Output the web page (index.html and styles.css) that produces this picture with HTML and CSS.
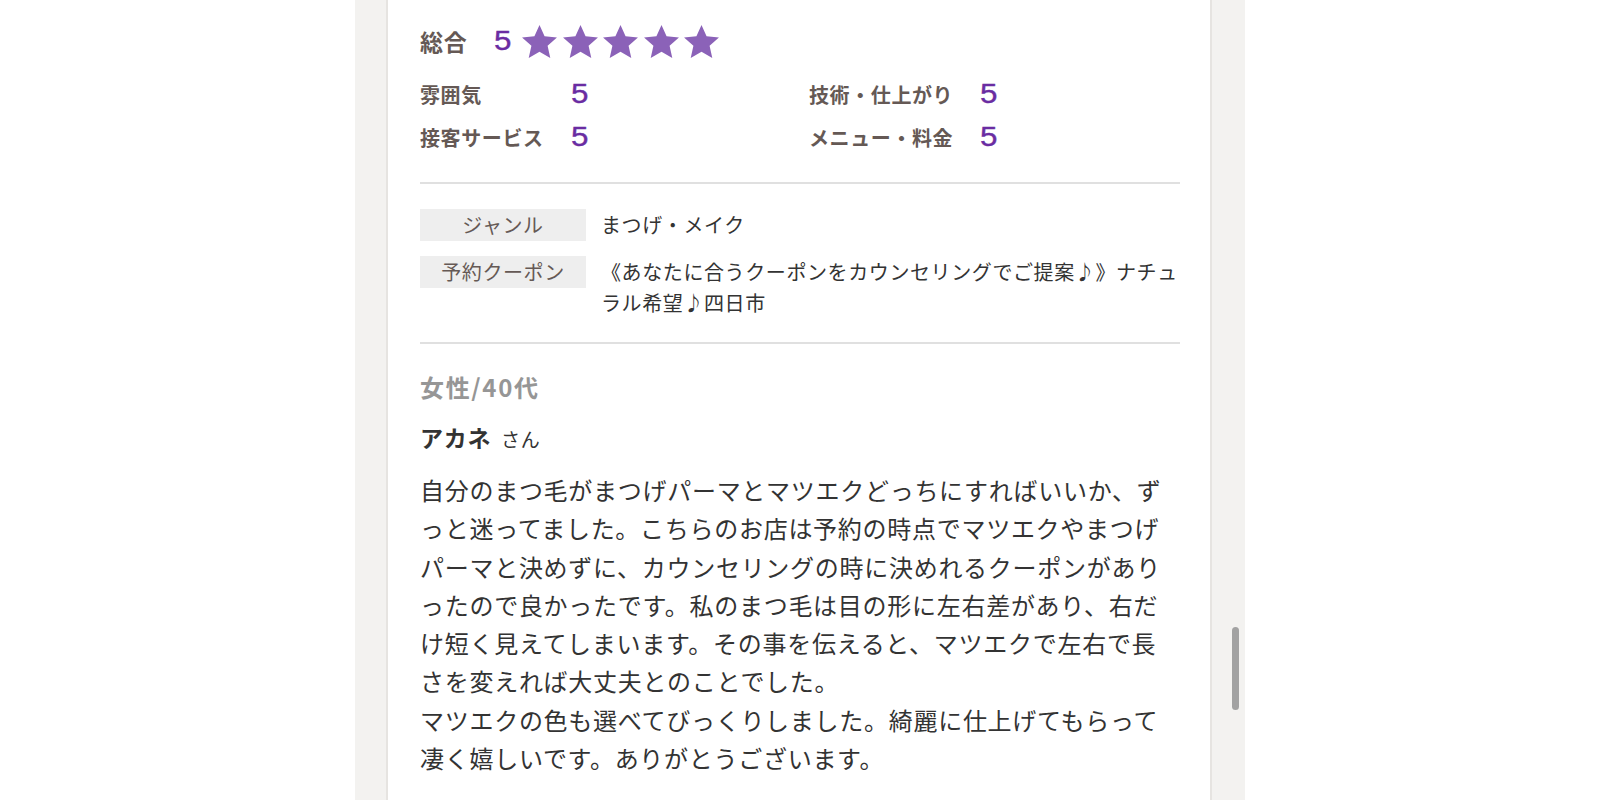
FILE: index.html
```html
<!DOCTYPE html>
<html lang="ja">
<head>
<meta charset="utf-8">
<title>口コミ</title>
<link rel="stylesheet" href="styles.css">
</head>
<body>
<div class="panel">
  <div class="card">
    <div class="overall">
      <span class="overall-label">総合</span>
      <span class="score overall-score">5</span>
      <span class="stars">
        <svg class="star" viewBox="1 0.5 22 20.8"><polygon points="12,0.5 15.2,7.6 23,8.4 17.1,13.6 18.8,21.3 12,17.3 5.2,21.3 6.9,13.6 1,8.4 8.8,7.6"/></svg>
        <svg class="star" viewBox="1 0.5 22 20.8"><polygon points="12,0.5 15.2,7.6 23,8.4 17.1,13.6 18.8,21.3 12,17.3 5.2,21.3 6.9,13.6 1,8.4 8.8,7.6"/></svg>
        <svg class="star" viewBox="1 0.5 22 20.8"><polygon points="12,0.5 15.2,7.6 23,8.4 17.1,13.6 18.8,21.3 12,17.3 5.2,21.3 6.9,13.6 1,8.4 8.8,7.6"/></svg>
        <svg class="star" viewBox="1 0.5 22 20.8"><polygon points="12,0.5 15.2,7.6 23,8.4 17.1,13.6 18.8,21.3 12,17.3 5.2,21.3 6.9,13.6 1,8.4 8.8,7.6"/></svg>
        <svg class="star" viewBox="1 0.5 22 20.8"><polygon points="12,0.5 15.2,7.6 23,8.4 17.1,13.6 18.8,21.3 12,17.3 5.2,21.3 6.9,13.6 1,8.4 8.8,7.6"/></svg>
      </span>
    </div>
    <div class="sub-ratings">
      <div class="sub"><span class="sub-label">雰囲気</span><span class="score">5</span></div>
      <div class="sub"><span class="sub-label">技術・仕上がり</span><span class="score">5</span></div>
      <div class="sub"><span class="sub-label">接客サービス</span><span class="score">5</span></div>
      <div class="sub"><span class="sub-label">メニュー・料金</span><span class="score">5</span></div>
    </div>
    <hr class="divider divider-1">
    <div class="info">
      <div class="info-row">
        <div class="info-label">ジャンル</div>
        <div class="info-value">まつげ・メイク</div>
      </div>
      <div class="info-row">
        <div class="info-label">予約クーポン</div>
        <div class="info-value">《あなたに合うクーポンをカウンセリングでご提案♪》ナチュラル希望♪四日市</div>
      </div>
    </div>
    <hr class="divider divider-2">
    <div class="reviewer-attr">女性/40代</div>
    <div class="reviewer-name"><span class="name">アカネ</span><span class="honorific">さん</span></div>
    <p class="review-body">自分のまつ毛がまつげパーマとマツエクどっちにすればいいか、ずっと迷ってました。こちらのお店は予約の時点でマツエクやまつげパーマと決めずに、カウンセリングの時に決めれるクーポンがありったので良かったです。私のまつ毛は目の形に左右差があり、右だけ短く見えてしまいます。その事を伝えると、マツエクで左右で長さを変えれば大丈夫とのことでした。<br>マツエクの色も選べてびっくりしました。綺麗に仕上げてもらって凄く嬉しいです。ありがとうございます。</p>
  </div>
  <div class="scroll-thumb"></div>
</div>
</body>
</html>
```

FILE: styles.css
```css
html, body {
  margin: 0;
  padding: 0;
  background: #ffffff;
}

body {
  font-family: "Noto Sans CJK JP", "Noto Sans", sans-serif;
  color: #333333;
}

.panel {
  position: relative;
  width: 890px;
  height: 800px;
  margin: 0 auto;
  background: #f3f2f0;
  overflow: hidden;
}

.card {
  margin-left: 31px;
  width: 760px;
  height: 800px;
  box-sizing: content-box;
  padding: 24px 30px 0 32px;
  background: #ffffff;
  border-left: 2px solid #e6e4e1;
  border-right: 2px solid #e6e4e1;
}

/* overall rating */
.overall {
  display: flex;
  align-items: center;
  height: 34px;
}

.overall-label {
  font-size: 23px;
  font-weight: 700;
  letter-spacing: 0.03em;
  color: #655955;
  width: 74px;
  line-height: 34px;
}

.score {
  font-family: "Liberation Sans", Arial, sans-serif;
  font-size: 28px;
  color: #6a2ca2;
  line-height: 32px;
  display: inline-block;
  transform: scaleX(1.12);
  transform-origin: left center;
  -webkit-text-stroke: 0.4px #6a2ca2;
}

.overall-score {
  width: 28px;
}

.stars {
  display: flex;
  gap: 5.5px;
}

.star {
  width: 35px;
  height: 33px;
  fill: #8b62b8;
  display: block;
}

/* sub ratings */
.sub-ratings {
  margin-top: 20px;
  display: grid;
  grid-template-columns: 389px 1fr;
  row-gap: 11px;
}

.sub {
  display: flex;
  align-items: center;
  height: 32px;
}

.sub-label {
  width: 151px;
  font-size: 20px;
  font-weight: 700;
  color: #655955;
  letter-spacing: 0.03em;
}

.sub-ratings .sub:nth-child(2n) .sub-label {
  width: 171px;
}

/* dividers */
.divider {
  margin: 0;
  border: 0;
  height: 2px;
  background: #e0e0e0;
}

.divider-1 {
  margin-top: 29px;
}

.divider-2 {
  margin-top: 24px;
}

/* info table */
.info {
  margin-top: 25px;
  display: flex;
  flex-direction: column;
  gap: 15px;
}

.info-row {
  display: flex;
  gap: 15px;
  align-items: flex-start;
}

.info-label {
  flex: 0 0 166px;
  height: 32px;
  line-height: 32px;
  background: #eeeeee;
  color: #655955;
  text-align: center;
  font-size: 20px;
  letter-spacing: 0.03em;
}

.info-value {
  flex: 1;
  font-family: "Noto Sans CJK JP", "DejaVu Sans", sans-serif;
  font-variant-emoji: text;
  font-size: 20px;
  line-height: 31px;
  letter-spacing: 0.03em;
  color: #333333;
}

/* reviewer */
.reviewer-attr {
  margin-top: 27px;
  font-size: 24px;
  font-weight: 700;
  letter-spacing: 0.07em;
  line-height: 32px;
  color: #969696;
}

.reviewer-name {
  margin-top: 18px;
  height: 32px;
  display: flex;
  align-items: baseline;
  color: #333333;
}

.name {
  font-size: 23px;
  font-weight: 700;
  letter-spacing: 0.03em;
  line-height: 32px;
}

.honorific {
  margin-left: 10px;
  font-size: 19px;
  letter-spacing: 0.03em;
  line-height: 32px;
}

.review-body {
  margin: 18px 0 0 0;
  font-size: 24px;
  line-height: 38.3px;
  letter-spacing: 0.03em;
  color: #333333;
}

/* overlay scrollbar */
.scroll-thumb {
  position: absolute;
  right: 6px;
  top: 627px;
  width: 7px;
  height: 83px;
  border-radius: 4px;
  background: #a2a2a2;
}
```
